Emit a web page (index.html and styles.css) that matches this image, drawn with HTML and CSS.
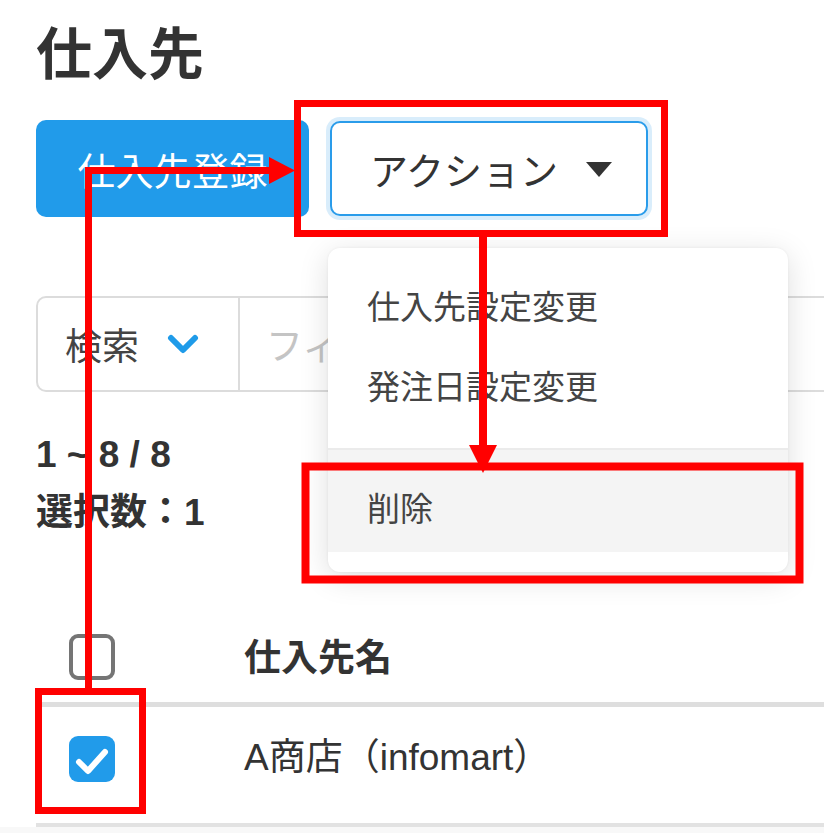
FILE: index.html
```html
<!DOCTYPE html>
<html lang="ja">
<head>
<meta charset="utf-8">
<title>仕入先</title>
<link rel="stylesheet" href="styles.css">
</head>
<body>
<div class="page">
  <h1 class="title">仕入先</h1>
  <div class="toolbar">
    <button class="btn btn-primary">仕入先登録</button>
    <button class="btn btn-action">アクション<span class="caret"></span></button>
  </div>
  <div class="search">
    <div class="search-addon">
      <span>検索</span>
      <svg class="chev" width="34" height="22" viewBox="0 0 34 22"><polyline points="4,4 16,16 28,4" fill="none" stroke="#1f9be9" stroke-width="6" stroke-linecap="round" stroke-linejoin="round"/></svg>
    </div>
    <div class="search-input"><span class="placeholder">フィルター</span></div>
  </div>
  <div class="stats">
    <div class="stat-line">1 ~ 8 / 8</div>
    <div class="stat-line">選択数：1</div>
  </div>
  <div class="table">
    <div class="row head">
      <div class="cell-check"><span class="checkbox"></span></div>
      <div class="cell-name">仕入先名</div>
    </div>
    <div class="row body-row">
      <div class="cell-check"><span class="checkbox checked"><svg width="46" height="46" viewBox="0 0 46 46"><polyline points="10,26 19,35 36,16" fill="none" stroke="#fff" stroke-width="6" stroke-linecap="round" stroke-linejoin="round"/></svg></span></div>
      <div class="cell-name">A商店（infomart）</div>
    </div>
    <div class="row stripe"></div>
  </div>

  <ul class="menu">
    <li class="menu-item">仕入先設定変更</li>
    <li class="menu-item">発注日設定変更</li>
    <li class="menu-divider"></li>
    <li class="menu-item hover">削除</li>
  </ul>
</div>

<svg class="annot" width="824" height="833" viewBox="0 0 824 833">
  <rect x="297.5" y="103.5" width="367" height="130" fill="none" stroke="#ff0000" stroke-width="7"/>
  <rect x="305.5" y="466.5" width="494" height="113" fill="none" stroke="#ff0000" stroke-width="8"/>
  <rect x="38.5" y="691.5" width="104" height="119" fill="none" stroke="#ff0000" stroke-width="7"/>
  <rect x="85" y="167" width="7" height="522" fill="#ff0000"/>
  <rect x="85" y="167" width="186" height="7" fill="#ff0000"/>
  <polygon points="269,157 295,170.5 269,184" fill="#ff0000"/>
  <rect x="479" y="236" width="8" height="212" fill="#ff0000"/>
  <polygon points="469,445 497,445 483,473" fill="#ff0000"/>
</svg>
</body>
</html>
```

FILE: styles.css
```css
html, body {
  margin: 0;
  padding: 0;
  background: #fff;
  overflow: hidden;
}

body {
  width: 824px;
  height: 833px;
  font-family: "Noto Sans CJK JP", sans-serif;
  color: #333;
  position: relative;
}

.page {
  position: relative;
  padding-left: 36px;
}

.title {
  margin: 0;
  padding-top: 22px;
  font-size: 56px;
  line-height: 56px;
  font-weight: 700;
  color: #333;
  height: 56px;
  margin-bottom: 42px;
}

.toolbar {
  display: flex;
  align-items: center;
  gap: 21px;
  height: 97px;
}

.btn {
  font-family: "Noto Sans CJK JP", sans-serif;
  font-size: 38px;
  border-radius: 10px;
  cursor: pointer;
  padding: 0;
  box-sizing: border-box;
}

.btn-primary {
  width: 273px;
  height: 97px;
  background: #219bea;
  color: #fff;
  border: none;
}

.btn-action {
  width: 318px;
  height: 95px;
  background: #fff;
  color: #333;
  border: 2px solid #2a9cea;
  box-shadow: 0 0 0 4px rgba(42, 156, 234, 0.18);
  display: flex;
  align-items: center;
  padding-left: 38px;
}

.caret {
  display: inline-block;
  width: 0;
  height: 0;
  border-left: 13px solid transparent;
  border-right: 13px solid transparent;
  border-top: 15px solid #333;
  margin-left: 28px;
  margin-top: 2px;
}

.search {
  margin-top: 79px;
  display: flex;
  height: 96px;
  box-sizing: border-box;
  border: 2px solid #dcdcdc;
  border-radius: 10px;
  margin-right: -40px;
}

.search-addon {
  width: 202px;
  box-sizing: border-box;
  border-right: 2px solid #dcdcdc;
  display: flex;
  align-items: center;
  padding-left: 27px;
  font-size: 37px;
  color: #444;
}

.chev {
  margin-left: 28px;
  margin-top: 2px;
}

.search-input {
  display: flex;
  align-items: center;
  padding-left: 26px;
  width: 88px;
  box-sizing: border-box;
  overflow: hidden;
  white-space: nowrap;
  font-size: 37px;
  color: #c4c4c4;
}

.stats {
  margin-top: 34px;
  font-family: "Liberation Sans", "Noto Sans CJK JP", sans-serif;
  font-weight: 700;
  font-size: 37px;
  color: #333;
}

.stat-line {
  height: 58px;
  line-height: 58px;
}

.table {
  margin-top: 66px;
  margin-left: -36px;
  padding-left: 36px;
}

.row {
  display: flex;
  align-items: center;
}

.row.head {
  height: 94px;
  border-bottom: 5px solid #dedede;
}

.row.body-row {
  height: 116px;
  align-items: flex-start;
  border-bottom: 4px solid #e2e2e2;
}

.row.body-row .cell-check {
  padding-top: 29px;
}

.row.body-row .cell-name {
  padding-top: 26px;
  font-weight: 400;
  font-family: "Liberation Sans", "Noto Sans CJK JP", sans-serif;
}

.row.stripe {
  height: 20px;
  background: #f8f8f8;
  margin-left: -36px;
}

.cell-check {
  width: 208px;
  box-sizing: border-box;
  padding-left: 33px;
  display: flex;
}

.cell-name {
  font-size: 37px;
  line-height: 50px;
  font-weight: 700;
  color: #333;
}

.checkbox {
  display: block;
  width: 46px;
  height: 46px;
  box-sizing: border-box;
  border: 4px solid #757575;
  border-radius: 9px;
  margin-top: 4px;
}

.checkbox.checked {
  border: none;
  background: #219bea;
  margin-top: 0;
}

.checkbox.checked svg {
  display: block;
}

.menu {
  position: absolute;
  left: 328px;
  top: 248px;
  width: 460px;
  margin: 0;
  padding: 17px 0 20px;
  list-style: none;
  background: #fff;
  border-radius: 12px;
  box-shadow: 0 6px 30px rgba(0, 0, 0, 0.13), 0 0 3px rgba(0, 0, 0, 0.06);
  box-sizing: border-box;
}

.menu-item {
  height: 80px;
  line-height: 80px;
  padding-left: 39px;
  font-size: 33px;
  color: #444;
}

.menu-divider {
  height: 2px;
  background: #ebebeb;
  margin-top: 23px;
}

.menu-item.hover {
  height: 102px;
  line-height: 102px;
  padding-top: 6px;
  box-sizing: border-box;
  background: #f4f4f4;
}

.annot {
  position: absolute;
  left: 0;
  top: 0;
  pointer-events: none;
}
```
